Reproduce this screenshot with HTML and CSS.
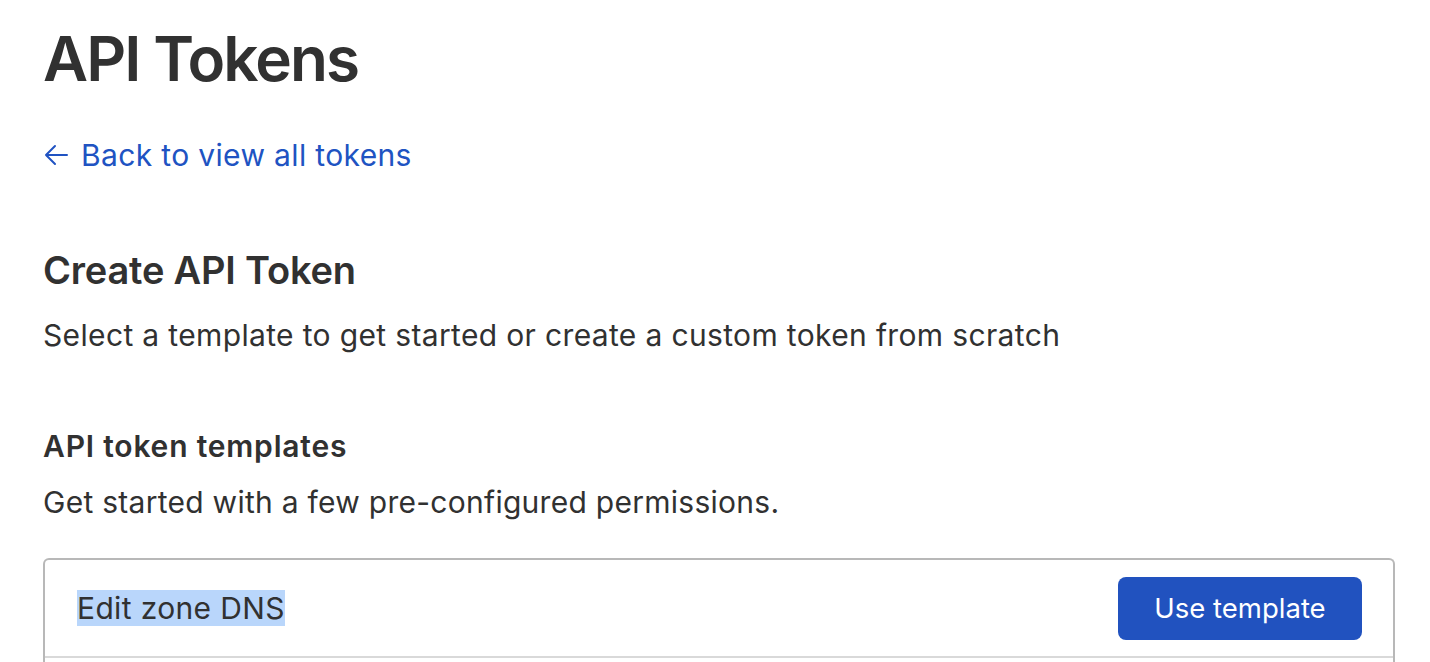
FILE: index.html
```html
<!DOCTYPE html>
<html lang="en">
<head>
<meta charset="utf-8">
<title>API Tokens</title>
<link rel="stylesheet" href="styles.css">
</head>
<body>
<main class="page">
  <h1 class="page-title">API Tokens</h1>
  <a class="back-link" href="#">
    <svg class="back-icon" viewBox="0 0 26 22" width="26" height="22" aria-hidden="true">
      <path d="M24 11H3M12 2L3 11l9 9" fill="none" stroke="currentColor" stroke-width="2" stroke-linecap="round" stroke-linejoin="round"/>
    </svg>
    <span>Back to view all tokens</span>
  </a>
  <h2 class="section-title">Create API Token</h2>
  <p class="section-desc">Select a template to get started or create a custom token from scratch</p>
  <h3 class="sub-title">API token templates</h3>
  <p class="sub-desc">Get started with a few pre-configured permissions.</p>
  <div class="card">
    <div class="card-row">
      <span class="row-name"><span class="selected">Edit zone DNS</span></span>
      <button class="btn-primary" type="button">Use template</button>
    </div>
  </div>
</main>
</body>
</html>
```

FILE: styles.css
```css
html, body {
  margin: 0;
  padding: 0;
  background: #ffffff;
}
body {
  font-family: Inter, "Noto Sans", "Liberation Sans", sans-serif;
  color: #313131;
  overflow: hidden;
}
.page {
  padding: 19px 35px 0 43px;
}
.page-title {
  margin: 0;
  font-size: 62px;
  font-weight: 600;
  line-height: 80px;
  letter-spacing: -1.9px;
  color: #313131;
}
.back-link {
  display: flex;
  width: max-content;
  align-items: center;
  gap: 12px;
  margin-top: 36px;
  color: #2053c2;
  text-decoration: none;
  font-size: 30px;
  line-height: 40px;
  letter-spacing: 0.35px;
}
.back-icon {
  flex: none;
}
.section-title {
  margin: 71px 0 0;
  font-size: 38px;
  font-weight: 600;
  line-height: 48px;
  letter-spacing: -0.2px;
  color: #313131;
}
.section-desc {
  margin: 21px 0 0;
  font-size: 30px;
  line-height: 40px;
  letter-spacing: 0.35px;
}
.sub-title {
  margin: 71px 0 0;
  font-size: 30px;
  font-weight: 600;
  line-height: 40px;
  letter-spacing: 0.8px;
}
.sub-desc {
  margin: 16px 0 0;
  font-size: 30px;
  line-height: 40px;
  letter-spacing: 0.27px;
}
.card {
  margin-top: 36px;
  border: 2px solid #b8b8b8;
  border-bottom: none;
  border-radius: 6px 6px 0 0;
  height: 110px;
}
.card-row {
  display: flex;
  align-items: center;
  justify-content: space-between;
  height: 96px;
  padding: 0 31px 0 32px;
  border-bottom: 2px solid #d9d9d9;
}
.row-name {
  font-size: 30px;
  line-height: 36px;
  letter-spacing: 0.35px;
}
.selected {
  background: #b9d6fb;
}
.btn-primary {
  font-family: inherit;
  font-size: 27.5px;
  color: #ffffff;
  background: #2152bf;
  border: none;
  border-radius: 8px;
  width: 244px;
  height: 63px;
  cursor: pointer;
}
```
